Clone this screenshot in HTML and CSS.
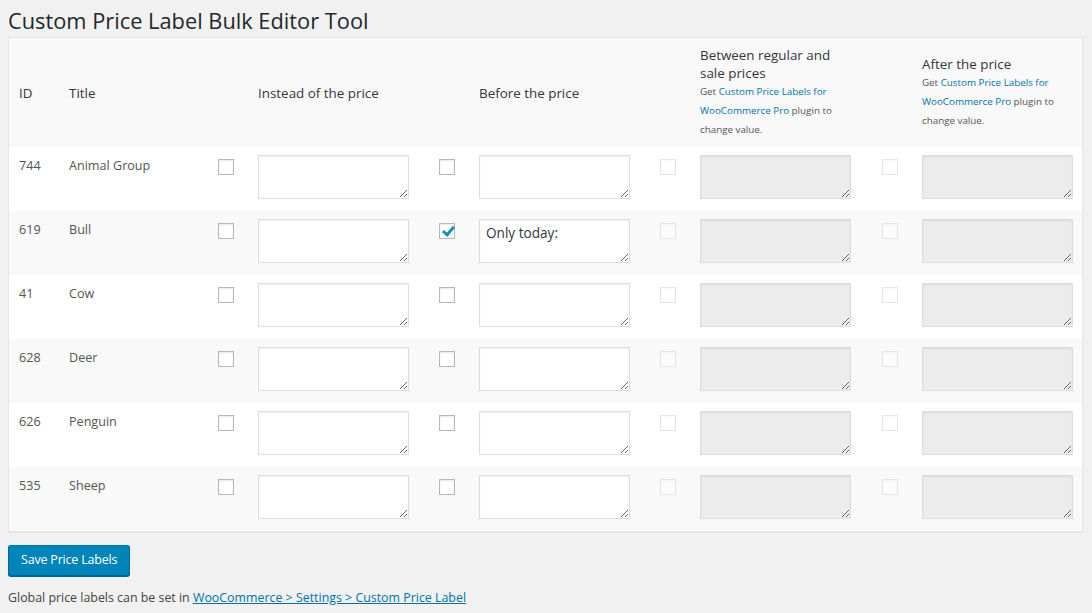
FILE: index.html
```html
<!DOCTYPE html>
<html lang="en">
<head>
<meta charset="utf-8">
<title>Custom Price Label Bulk Editor Tool</title>
<link rel="stylesheet" href="styles.css">
</head>
<body>
<div class="wrap">
  <h1 class="page-title">Custom Price Label Bulk Editor Tool</h1>
  <form class="editor">
    <table class="grid">
      <colgroup>
        <col class="c-id"><col class="c-title"><col class="c-cb"><col class="c-ta"><col class="c-cb"><col class="c-ta"><col class="c-cb"><col class="c-ta3"><col class="c-cb"><col class="c-ta4">
      </colgroup>
      <thead>
        <tr>
          <th>ID</th>
          <th>Title</th>
          <th></th>
          <th>Instead of the price</th>
          <th></th>
          <th>Before the price</th>
          <th></th>
          <th><span class="h-label">Between regular and sale prices</span><div class="pro">Get <a href="#">Custom Price Labels for WooCommerce Pro</a> plugin to change value.</div></th>
          <th></th>
          <th><span class="h-label">After the price</span><div class="pro">Get <a href="#">Custom Price Labels for WooCommerce Pro</a> plugin to change value.</div></th>
        </tr>
      </thead>
      <tbody>
        <tr>
          <td>744</td><td>Animal Group</td>
          <td><input type="checkbox" class="cb"></td><td><textarea class="ta"></textarea></td>
          <td><input type="checkbox" class="cb"></td><td><textarea class="ta"></textarea></td>
          <td><input type="checkbox" class="cb" disabled></td><td><textarea class="ta" disabled></textarea></td>
          <td><input type="checkbox" class="cb" disabled></td><td><textarea class="ta" disabled></textarea></td>
        </tr>
        <tr>
          <td>619</td><td>Bull</td>
          <td><input type="checkbox" class="cb"></td><td><textarea class="ta"></textarea></td>
          <td><input type="checkbox" class="cb" checked></td><td><textarea class="ta">Only today:</textarea></td>
          <td><input type="checkbox" class="cb" disabled></td><td><textarea class="ta" disabled></textarea></td>
          <td><input type="checkbox" class="cb" disabled></td><td><textarea class="ta" disabled></textarea></td>
        </tr>
        <tr>
          <td>41</td><td>Cow</td>
          <td><input type="checkbox" class="cb"></td><td><textarea class="ta"></textarea></td>
          <td><input type="checkbox" class="cb"></td><td><textarea class="ta"></textarea></td>
          <td><input type="checkbox" class="cb" disabled></td><td><textarea class="ta" disabled></textarea></td>
          <td><input type="checkbox" class="cb" disabled></td><td><textarea class="ta" disabled></textarea></td>
        </tr>
        <tr>
          <td>628</td><td>Deer</td>
          <td><input type="checkbox" class="cb"></td><td><textarea class="ta"></textarea></td>
          <td><input type="checkbox" class="cb"></td><td><textarea class="ta"></textarea></td>
          <td><input type="checkbox" class="cb" disabled></td><td><textarea class="ta" disabled></textarea></td>
          <td><input type="checkbox" class="cb" disabled></td><td><textarea class="ta" disabled></textarea></td>
        </tr>
        <tr>
          <td>626</td><td>Penguin</td>
          <td><input type="checkbox" class="cb"></td><td><textarea class="ta"></textarea></td>
          <td><input type="checkbox" class="cb"></td><td><textarea class="ta"></textarea></td>
          <td><input type="checkbox" class="cb" disabled></td><td><textarea class="ta" disabled></textarea></td>
          <td><input type="checkbox" class="cb" disabled></td><td><textarea class="ta" disabled></textarea></td>
        </tr>
        <tr>
          <td>535</td><td>Sheep</td>
          <td><input type="checkbox" class="cb"></td><td><textarea class="ta"></textarea></td>
          <td><input type="checkbox" class="cb"></td><td><textarea class="ta"></textarea></td>
          <td><input type="checkbox" class="cb" disabled></td><td><textarea class="ta" disabled></textarea></td>
          <td><input type="checkbox" class="cb" disabled></td><td><textarea class="ta" disabled></textarea></td>
        </tr>
      </tbody>
    </table>
    <button type="button" class="save">Save Price Labels</button>
  </form>
  <p class="note">Global price labels can be set in <a href="#">WooCommerce &gt; Settings &gt; Custom Price Label</a></p>
</div>
</body>
</html>
```

FILE: styles.css
```css
html, body {
  margin: 0;
  padding: 0;
  background: #f1f1f1;
}
body {
  font-family: "Segoe UI", "Open Sans", "Noto Sans", sans-serif;
  color: #444;
  font-size: 13px;
}
.wrap {
  padding: 0 9px 0 8px;
}
.page-title {
  margin: 0;
  padding: 6px 0 2px;
  font-size: 21.8px;
  line-height: 29px;
  font-weight: 400;
  color: #23282d;
}
.grid {
  width: 1075px;
  table-layout: fixed;
  border-collapse: separate;
  border-spacing: 0;
  border: 1px solid #e5e5e5;
  background: #fff;
  box-shadow: 0 1px 1px rgba(0,0,0,.04);
}
.c-id { width: 50px; }
.c-title { width: 149px; }
.c-cb { width: 40px; }
.c-ta { width: 181px; }
.c-ta3 { width: 182px; }
.c-ta4 { width: 170px; }
.grid thead th {
  background: #f9f9f9;
  height: 93px;
  padding: 8px 10px;
  text-align: left;
  vertical-align: middle;
  font-weight: 400;
  font-size: 13.4px;
  line-height: 18.2px;
  color: #32373c;
}
.h-label {
  display: block;
  max-width: 140px;
}
.pro {
  font-size: 9.8px;
  line-height: 19px;
  color: #555;
}
.pro a {
  color: #0073aa;
  text-decoration: none;
}
.grid tbody td {
  height: 47px;
  padding: 9px 10px 8px;
  vertical-align: top;
  font-size: 12.6px;
  line-height: 20px;
  color: #555;
}
.grid tbody tr:nth-child(even) td {
  background: #f9f9f9;
}
.cb {
  -webkit-appearance: none;
  appearance: none;
  display: block;
  position: relative;
  margin: 3px 0 0;
  width: 16px;
  height: 16px;
  border: 1px solid #b4b9be;
  background: #fff;
  box-shadow: inset 0 1px 2px rgba(0,0,0,.1);
  box-sizing: border-box;
}
.cb:disabled {
  border-color: rgba(222,222,222,.75);
  background: rgba(255,255,255,.5);
  box-shadow: inset 0 1px 2px rgba(0,0,0,.04);
}
.cb:checked::before {
  content: "";
  position: absolute;
  left: 5px;
  top: 0px;
  width: 4px;
  height: 9px;
  border-right: 3px solid #1e8cbe;
  border-bottom: 3px solid #1e8cbe;
  transform: rotate(40deg);
}
.ta {
  display: block;
  box-sizing: border-box;
  width: 151px;
  height: 44px;
  margin: -1px 0 0;
  padding: 3px 6px;
  border: 1px solid #ddd;
  box-shadow: inset 0 1px 2px rgba(0,0,0,.07);
  background: #fff;
  color: #32373c;
  font-family: inherit;
  font-size: 13.6px;
  line-height: 20px;
}
.ta:disabled {
  background: #ececec;
  border-color: #ddd;
}
.save {
  display: block;
  margin: 13px 0 0;
  height: 31px;
  padding: 0 12px 2px;
  border: 1px solid;
  border-color: #0073aa #006799 #006799;
  border-radius: 3px;
  background: #0085ba;
  box-shadow: 0 1px 0 #006799;
  color: #fff;
  font-family: inherit;
  font-size: 12.5px;
  letter-spacing: -0.2px;
  line-height: 26px;
}
.note {
  margin: 13px 0 0;
  font-size: 12.4px;
  line-height: 18px;
  color: #444;
}
.note a {
  color: #0073aa;
  text-decoration: underline;
}
```
